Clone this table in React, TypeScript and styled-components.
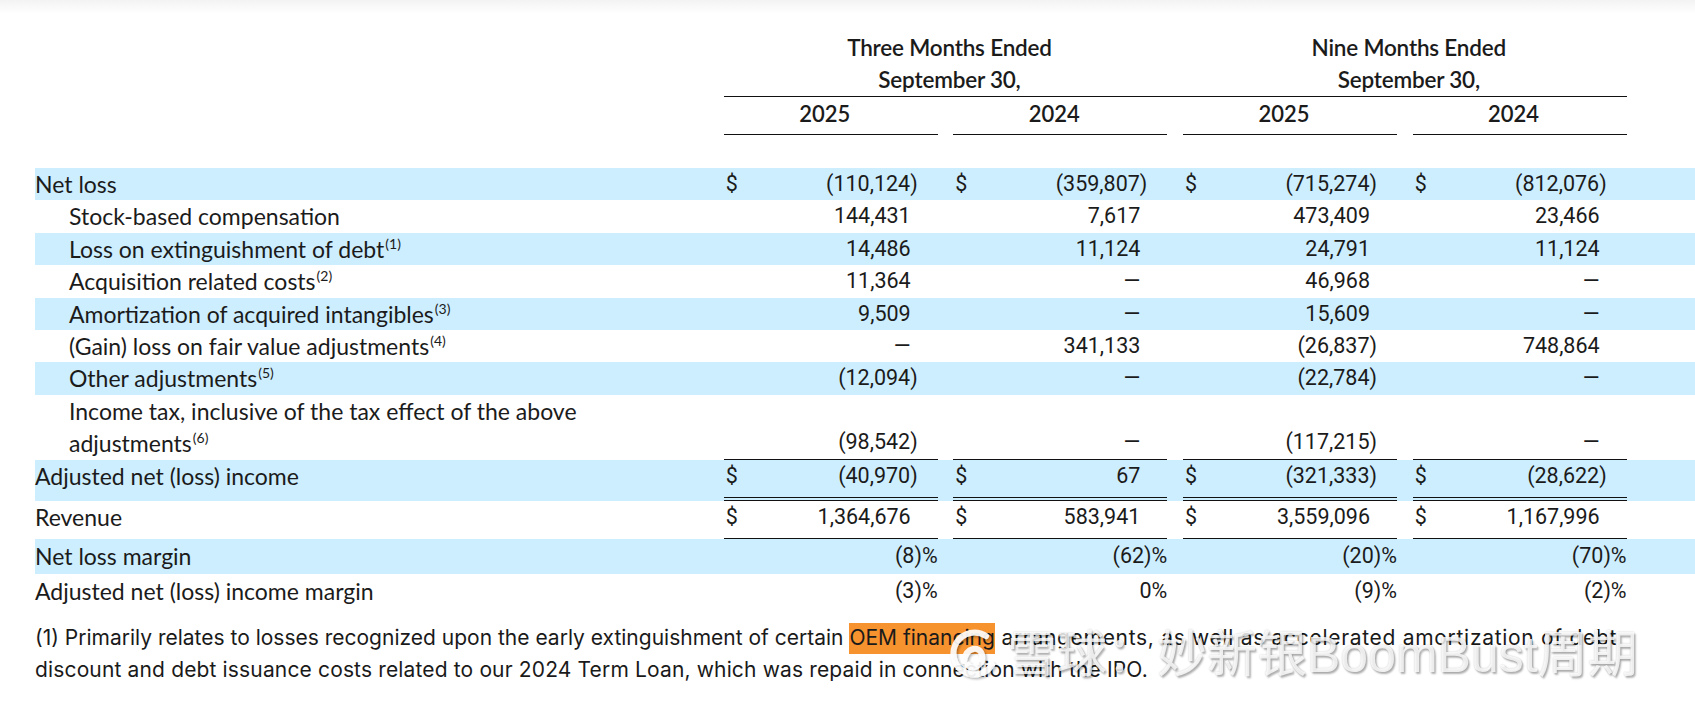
import React from "react"
import styled, { createGlobalStyle, css } from "styled-components"

const GlobalStyle = createGlobalStyle`
  html, body {
    margin: 0;
    padding: 0;
    background: #ffffff;
  }
  body {
    font-family: Lato, "Noto Sans", sans-serif;
    color: #1b1b1b;
  }
`

type Val = { v: string; dollar?: boolean }
type RowData = {
  label: React.ReactNode
  note?: number
  indent?: boolean
  hl?: boolean
  vals: Val[]
  kind?: "tall" | "adjusted" | "revenue" | "margin"
}

const d = (v: string): Val => ({ v, dollar: true })
const n = (v: string): Val => ({ v })
const DASH = "—"

const rows: RowData[] = [
  {
    label: "Net loss",
    hl: true,
    vals: [d("(110,124)"), d("(359,807)"), d("(715,274)"), d("(812,076)")],
  },
  {
    label: "Stock-based compensation",
    indent: true,
    vals: [n("144,431"), n("7,617"), n("473,409"), n("23,466")],
  },
  {
    label: "Loss on extinguishment of debt",
    note: 1,
    indent: true,
    hl: true,
    vals: [n("14,486"), n("11,124"), n("24,791"), n("11,124")],
  },
  {
    label: "Acquisition related costs",
    note: 2,
    indent: true,
    vals: [n("11,364"), n(DASH), n("46,968"), n(DASH)],
  },
  {
    label: "Amortization of acquired intangibles",
    note: 3,
    indent: true,
    hl: true,
    vals: [n("9,509"), n(DASH), n("15,609"), n(DASH)],
  },
  {
    label: "(Gain) loss on fair value adjustments",
    note: 4,
    indent: true,
    vals: [n(DASH), n("341,133"), n("(26,837)"), n("748,864")],
  },
  {
    label: "Other adjustments",
    note: 5,
    indent: true,
    hl: true,
    vals: [n("(12,094)"), n(DASH), n("(22,784)"), n(DASH)],
  },
  {
    label: (
      <>
        Income tax, inclusive of the tax effect of the above
        <br />
        adjustments
      </>
    ),
    note: 6,
    indent: true,
    kind: "tall",
    vals: [n("(98,542)"), n(DASH), n("(117,215)"), n(DASH)],
  },
  {
    label: "Adjusted net (loss) income",
    hl: true,
    kind: "adjusted",
    vals: [d("(40,970)"), d("67"), d("(321,333)"), d("(28,622)")],
  },
  {
    label: "Revenue",
    kind: "revenue",
    vals: [d("1,364,676"), d("583,941"), d("3,559,096"), d("1,167,996")],
  },
  {
    label: "Net loss margin",
    hl: true,
    kind: "margin",
    vals: [n("(8)%"), n("(62)%"), n("(20)%"), n("(70)%")],
  },
  {
    label: "Adjusted net (loss) income margin",
    kind: "margin",
    vals: [n("(3)%"), n("0%"), n("(9)%"), n("(2)%")],
  },
]

export default function App() {
  return (
    <>
      <GlobalStyle />
      <Page>
        <TopShade />
        <HeaderRow>
          <GroupBand>
            <GroupTitle>
              Three Months Ended
              <br />
              September 30,
            </GroupTitle>
            <GroupTitle>
              Nine Months Ended
              <br />
              September 30,
            </GroupTitle>
          </GroupBand>
        </HeaderRow>
        <YearRow>
          <span />
          {["2025", "2024", "2025", "2024"].map((y, i) => (
            <YearCell key={i}>{y}</YearCell>
          ))}
        </YearRow>

        <Body>
          {rows.map((r, i) => (
            <Row key={i} $hl={r.hl} $kind={r.kind}>
              <Label $indent={r.indent}>
                {r.label}
                {r.note && <Sup>({r.note})</Sup>}
              </Label>
              {r.vals.map((c, j) => {
                const pct = c.v.endsWith("%")
                return (
                  <Value key={j} $kind={r.kind} $flush={pct}>
                    <Dollar>{c.dollar ? "$" : ""}</Dollar>
                    <Num $paren={pct || c.v.endsWith(")")}>{c.v}</Num>
                  </Value>
                )
              })}
            </Row>
          ))}
        </Body>

        <Notes>
          <NoteLine>
            (1) Primarily relates to losses recognized upon the early
            extinguishment of certain <Mark>OEM financing</Mark>
            <Wide> arrangements, as well as accelerated amortization of debt</Wide>
          </NoteLine>
          <NoteLine $spacing={0.15}>
            discount and debt issuance costs related to our 2024 Term Loan,
            which was repaid in connection with the IPO.
          </NoteLine>
          <Watermark>
            <svg width="54" height="58" viewBox="0 0 54 58">
              <defs>
                <filter id="wmShadow" x="-20%" y="-20%" width="150%" height="150%">
                  <feDropShadow dx="1.5" dy="1.5" stdDeviation="1.2" floodColor="#000" floodOpacity="0.35" />
                </filter>
              </defs>
              <g
                fill="none"
                stroke="rgba(255,255,255,0.9)"
                strokeWidth="6"
                strokeLinecap="round"
                filter="url(#wmShadow)"
              >
                <path d="M39 10 A21 21 0 1 0 45 39" />
                <path d="M17 35 C19 21 33 19 35 29 C37 39 25 45 21 39" />
              </g>
            </svg>
            <WatermarkText>雪球：妙新银BoomBust周期</WatermarkText>
          </Watermark>
        </Notes>
      </Page>
    </>
  )
}

const GRID = css`
  display: grid;
  grid-template-columns: 673px repeat(4, 214px);
  column-gap: 15.67px;
`

const Page = styled.div`
  position: relative;
  width: 1695px;
  height: 718px;
  overflow: hidden;
  box-sizing: border-box;
  padding: 32px 0 0 35px;
  background: #ffffff;
`

const TopShade = styled.div`
  position: absolute;
  top: 0;
  left: 0;
  right: 0;
  height: 14px;
  background: linear-gradient(#f3f3f3, #ffffff);
`

const HeaderRow = styled.div`
  ${GRID}
`

const GroupBand = styled.div`
  grid-column: 2 / 6;
  display: grid;
  grid-template-columns: 1fr 1fr;
  column-gap: 15.67px;
  border-bottom: 1px solid #111;
`

const GroupTitle = styled.div`
  text-align: center;
  font-weight: 600;
  font-size: 22.5px;
  line-height: 32px;
  letter-spacing: -0.2px;
  padding-left: 8px;
`

const YearRow = styled.div`
  ${GRID}
`

const YearCell = styled.div`
  text-align: center;
  font-weight: 600;
  font-size: 22px;
  line-height: 32px;
  padding: 1px 12px 4px 0;
  border-bottom: 1px solid #111;
`

const Body = styled.div`
  margin-top: 33px;
`

const Row = styled.div<{ $hl?: boolean; $kind?: RowData["kind"] }>`
  ${GRID}
  background: ${(p) => (p.$hl ? "#cdeefe" : "transparent")};
  font-size: 23px;
  line-height: 32.4px;
  padding-top: ${(p) => (p.$kind === "margin" ? "1px" : "0")};
`

const Label = styled.div<{ $indent?: boolean }>`
  padding-left: ${(p) => (p.$indent ? "34px" : "0")};
  white-space: nowrap;
`

const Sup = styled.sup`
  font-size: 14px;
  line-height: 0;
  vertical-align: 9px;
  margin-left: 1px;
`

const Value = styled.div<{ $kind?: RowData["kind"]; $flush?: boolean }>`
  display: flex;
  justify-content: space-between;
  align-items: flex-end;
  padding-left: 2px;
  padding-right: ${(p) => (p.$flush ? "0" : "20px")};
  font-family: Roboto, Lato, sans-serif;
  font-size: 21.5px;
  ${(p) =>
    p.$kind === "tall" &&
    css`
      border-bottom: 1px solid #111;
    `}
  ${(p) =>
    p.$kind === "adjusted" &&
    css`
      padding-bottom: 5px;
      border-bottom: 4px double #111;
    `}
  ${(p) =>
    p.$kind === "revenue" &&
    css`
      padding-bottom: 5px;
      border-bottom: 1px solid #111;
    `}
  ${(p) =>
    p.$kind === "margin" &&
    css`
      padding-bottom: 1px;
    `}
`

const Dollar = styled.span``

const Num = styled.span<{ $paren?: boolean }>`
  padding-right: ${(p) => (p.$paren ? "0" : "7px")};
`

const Notes = styled.div`
  position: relative;
  margin-top: 14px;
  font-family: Inter, "Noto Sans", sans-serif;
  font-size: 21px;
  line-height: 32px;
  color: #1a1a1a;
`

const NoteLine = styled.div<{ $spacing?: number }>`
  white-space: nowrap;
  letter-spacing: ${(p) => p.$spacing ?? 0}px;
`

const Mark = styled.span`
  background: #f7932f;
  padding: 2px 0 4px;
`

const Wide = styled.span`
  letter-spacing: 0.7px;
`

const Watermark = styled.div`
  position: absolute;
  left: 912px;
  top: 3px;
  display: flex;
  align-items: center;
  gap: 6px;
  pointer-events: none;
`

const WatermarkText = styled.span`
  font-family: "Liberation Sans", "Noto Sans CJK SC", sans-serif;
  font-size: 50px;
  line-height: 60px;
  color: rgba(255, 255, 255, 0.82);
  text-shadow: 1.5px 1.5px 2px rgba(0, 0, 0, 0.3), 0 0 2px rgba(0, 0, 0, 0.2);
  white-space: nowrap;
`
